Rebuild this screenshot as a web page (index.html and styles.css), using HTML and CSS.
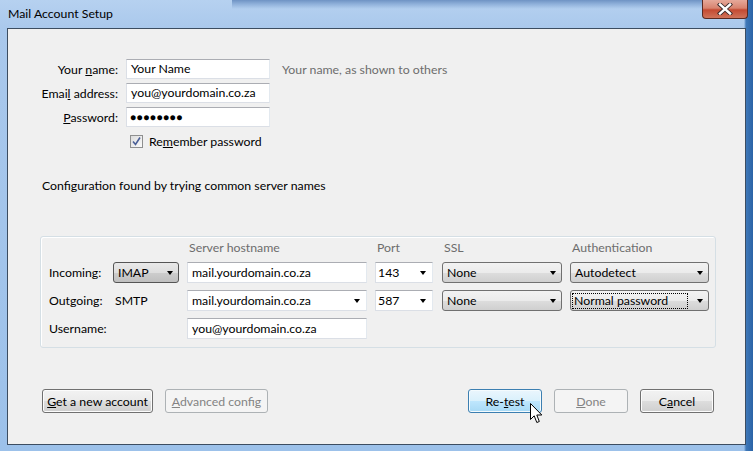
FILE: index.html
```html
<!DOCTYPE html>
<html lang="en">
<head>
    <meta charset="UTF-8">
    <title>Mail Account Setup</title>
    <link rel="stylesheet" href="styles.css">
</head>
<body>
    <div class="window">
        <!-- title bar -->
        <div class="titlebar">
            <span class="title">Mail Account Setup</span>
            <span class="close-btn">
                <svg width="16" height="12" viewBox="0 0 16 12">
                    <path d="M3 1.5 L13 10.5 M13 1.5 L3 10.5" stroke="#3a2a2a" stroke-width="4.2" stroke-linecap="square"/>
                    <path d="M3 1.5 L13 10.5 M13 1.5 L3 10.5" stroke="#ffffff" stroke-width="2.4" stroke-linecap="square"/>
                </svg>
            </span>
        </div>

        <div class="client">
            <!-- identity -->
            <div class="identity">
                <label class="lbl">Your <u>n</u>ame:</label>
                <div class="textbox">Your Name</div>
                <span class="hint">Your name, as shown to others</span>

                <label class="lbl">Emai<u>l</u> address:</label>
                <div class="textbox">you@yourdomain.co.za</div>
                <span></span>

                <label class="lbl"><u>P</u>assword:</label>
                <div class="textbox dots">&#9679;&#9679;&#9679;&#9679;&#9679;&#9679;&#9679;&#9679;</div>
                <span></span>

                <div class="check-row">
                    <span class="checkbox">
                        <svg width="9" height="9" viewBox="0 0 9 9">
                            <path d="M1 4.5 L3.5 7.5 L8 0.5" fill="none" stroke="#4a5f97" stroke-width="1.6"/>
                        </svg>
                    </span>
                    <span>Re<u>m</u>ember password</span>
                </div>
            </div>

            <div class="status">Configuration found by trying common server names</div>

            <!-- server settings -->
            <div class="groupbox">
                <span></span>
                <span></span>
                <span class="col-head">Server hostname</span>
                <span class="col-head">Port</span>
                <span class="col-head">SSL</span>
                <span class="col-head">Authentication</span>

                <span class="row-lbl">Incoming:</span>
                <div class="select proto">IMAP<i class="arrow"></i></div>
                <div class="textbox host">mail.yourdomain.co.za</div>
                <div class="textbox combo port">143<i class="arrow"></i></div>
                <div class="select ssl">None<i class="arrow"></i></div>
                <div class="select auth">Autodetect<i class="arrow"></i></div>

                <span class="row-lbl">Outgoing:</span>
                <span class="proto-text">SMTP</span>
                <div class="textbox combo host">mail.yourdomain.co.za<i class="arrow"></i></div>
                <div class="textbox combo port">587<i class="arrow"></i></div>
                <div class="select ssl">None<i class="arrow"></i></div>
                <div class="select auth"><span class="focus">Normal password</span><i class="arrow"></i></div>

                <span class="row-lbl">Username:</span>
                <span></span>
                <div class="textbox host">you@yourdomain.co.za</div>
            </div>

            <!-- buttons -->
            <div class="buttons">
                <button class="btn wide"><u>G</u>et a new account</button>
                <button class="btn adv" disabled><u>A</u>dvanced config</button>
                <span class="spacer"></span>
                <button class="btn hot">Re-<u>t</u>est</button>
                <button class="btn" disabled><u>D</u>one</button>
                <button class="btn">C<u>a</u>ncel</button>
            </div>
        </div>

        <!-- mouse pointer -->
        <svg class="cursor" width="13" height="21" viewBox="0 0 13 21">
            <path d="M0.5 0.5 L0.5 16.5 L4.2 12.8 L6.8 19.5 L9.3 18.5 L6.8 12 L11.8 12 Z" fill="#fff" stroke="#000" stroke-width="1"/>
        </svg>
    </div>
</body>
</html>
```

FILE: styles.css
```css
body {
    margin: 0;
    font-family: "Lato", "Open Sans", sans-serif;
    font-size: 12.3px;
    color: #000;
    overflow: hidden;
}

/* window frame */
.window {
    position: relative;
    width: 753px;
    height: 451px;
    box-sizing: border-box;
    padding: 0 7px 6px 7px;
    display: flex;
    flex-direction: column;
    background:
        linear-gradient(90deg, rgba(255,255,255,0) 0, rgba(255,255,255,0) 744px, #3f78b8 746px, #2a63a6 753px),
        linear-gradient(180deg, #b6d1f0 0, #a9c8ec 30px, #9cc1ea 100%);
}

.titlebar {
    height: 28px;
    display: flex;
    justify-content: space-between;
    align-items: flex-start;
    background:
        linear-gradient(180deg, #6f93c4 0, #8fb0da 4px, rgba(180,208,240,0) 9px) 225px 0 / 495px 10px no-repeat;
}

.title {
    margin-top: 6px;
    padding-left: 1px;
    line-height: 16px;
}

.close-btn {
    width: 46px;
    height: 19px;
    margin-right: -2px;
    box-sizing: border-box;
    border: 1px solid #5a2a22;
    border-top: none;
    border-radius: 0 0 4px 4px;
    background: linear-gradient(180deg, #e6a99a 0, #d8836f 45%, #c44a32 55%, #d0735a 100%);
    display: flex;
    align-items: center;
    justify-content: center;
}

.client {
    flex: 1;
    border: 1px solid #3c4d61;
    background: #f0f0f0;
    display: flex;
    flex-direction: column;
}

/* identity fields */
.identity {
    display: grid;
    grid-template-columns: 78px 152px auto;
    grid-auto-rows: 20px;
    row-gap: 4px;
    padding: 30px 0 0 32px;
    align-items: center;
}

.lbl {
    text-align: right;
}

.textbox {
    position: relative;
    height: 20px;
    box-sizing: border-box;
    border: 1px solid #dbdfe6;
    border-top-color: #abadb3;
    border-right-color: #e3e9ef;
    background: #fff;
    padding: 0 4px;
    line-height: 18px;
    white-space: nowrap;
}

.identity .textbox {
    width: 144px;
    margin-left: 8px;
}

.dots {
    font-size: 10px;
    letter-spacing: 0.6px;
    padding-left: 3px;
}

.hint {
    margin-left: 12px;
    color: #6d6d6d;
}

.check-row {
    grid-column: 2 / 4;
    margin-left: 12px;
    display: flex;
    align-items: center;
    gap: 6px;
}

.checkbox {
    width: 13px;
    height: 13px;
    box-sizing: border-box;
    border: 1px solid #8e8f8f;
    background: linear-gradient(135deg, #dcdcdc, #fbfbfb);
    display: flex;
    align-items: center;
    justify-content: center;
}

.status {
    margin: 27px 0 0 34px;
    line-height: 16px;
}

/* server settings box */
.groupbox {
    width: 676px;
    box-sizing: border-box;
    margin: 42px 0 0 32px;
    padding: 2px 0 8px 8px;
    border: 1px solid #d5dfe5;
    border-radius: 3px;
    box-shadow: inset 1px 1px 0 #fff;
    display: grid;
    grid-template-columns: 64px 74px 188px 67px 128px 140px;
    grid-template-rows: 16px 21px 21px 21px;
    row-gap: 7px;
    align-items: center;
}

.groupbox .col-head {
    color: #6d6d6d;
    margin-left: 2px;
    align-self: end;
    line-height: 15px;
}

.groupbox .textbox {
    height: 21px;
    line-height: 19px;
}

.proto-text {
    padding-left: 2px;
}

.host { width: 180px; }
.port { width: 58px; padding-left: 2px; }
.proto { width: 66px; }
.ssl { width: 120px; }
.auth { width: 139px; }

.select {
    position: relative;
    height: 21px;
    box-sizing: border-box;
    border: 1px solid #707070;
    border-radius: 3px;
    background: linear-gradient(180deg, #f2f2f2 0, #ebebeb 50%, #dddddd 51%, #cfcfcf 100%);
    padding: 0 4px;
    line-height: 19px;
    white-space: nowrap;
}

.proto {
    background: linear-gradient(180deg, #e9e9e9 0, #dedede 50%, #cdcdcd 51%, #bfbfbf 100%);
    border-color: #555;
}

.arrow {
    position: absolute;
    right: 5px;
    top: 8px;
    width: 0;
    height: 0;
    border-left: 3.5px solid transparent;
    border-right: 3.5px solid transparent;
    border-top: 4px solid #000;
}

.combo .arrow {
    right: 6px;
}

.focus {
    display: inline-block;
    width: 113px;
    line-height: 14px;
    margin-left: -2px;
    padding-left: 1px;
    outline: 1px dotted #000;
}

/* buttons */
.buttons {
    display: flex;
    gap: 12px;
    margin: 41px 31px 0 34px;
}

.spacer {
    flex: 1;
}

.btn {
    height: 24px;
    width: 74px;
    padding: 0;
    font: inherit;
    color: #000;
    border: 1px solid #707070;
    border-radius: 3px;
    box-shadow: inset 0 0 0 1px #fcfcfc;
    background: linear-gradient(180deg, #f2f2f2 0, #ebebeb 50%, #dddddd 51%, #cfcfcf 100%);
}

.btn.wide { width: 111px; }
.btn.adv { width: 103px; }

.btn.hot {
    border-color: #3c7fb1;
    box-shadow: inset 0 0 0 1px #f4fbfe;
    background: linear-gradient(180deg, #eaf6fd 0, #d9f0fc 50%, #bee6fd 51%, #a7d9f5 100%);
}

.btn:disabled {
    color: #838383;
    border-color: #adb2b5;
    box-shadow: none;
    background: #f4f4f4;
}

/* mouse pointer */
.cursor {
    position: absolute;
    left: 530px;
    top: 403px;
}
```
